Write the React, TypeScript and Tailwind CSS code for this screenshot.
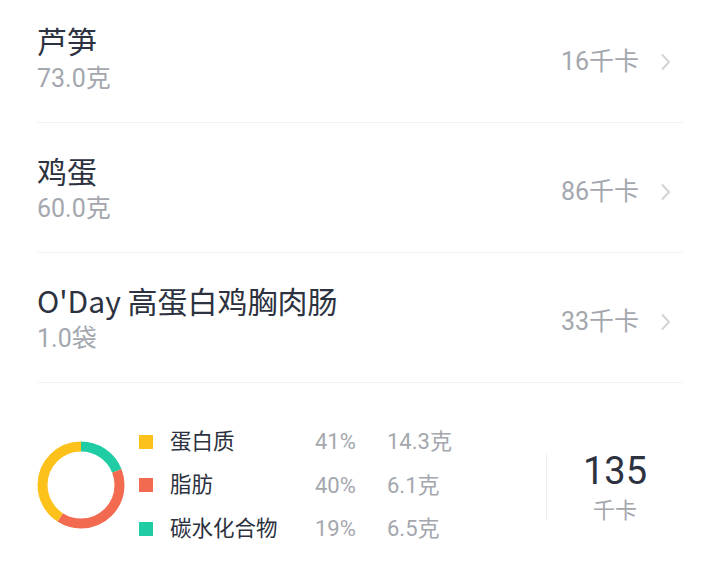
import React from "react";

const items = [
  { name: "芦笋", amount: "73.0克", kcal: "16千卡" },
  { name: "鸡蛋", amount: "60.0克", kcal: "86千卡" },
  { name: "O'Day 高蛋白鸡胸肉肠", amount: "1.0袋", kcal: "33千卡" },
];

const macros = [
  { label: "蛋白质", pct: "41%", g: "14.3克", color: "bg-[#fcc11b]" },
  { label: "脂肪", pct: "40%", g: "6.1克", color: "bg-[#f26a4f]" },
  { label: "碳水化合物", pct: "19%", g: "6.5克", color: "bg-[#1fcca3]" },
];

function Donut() {
  const r = 38.5;
  const c = 2 * Math.PI * r;
  const segs = [
    { v: 0.19, color: "#1fcca3" },
    { v: 0.4, color: "#f26a4f" },
    { v: 0.41, color: "#fcc11b" },
  ];
  let off = 0;
  return (
    <svg width="88" height="88" viewBox="0 0 88 88">
      <g transform="rotate(-90 44 44)">
        {segs.map((s, i) => {
          const el = (
            <circle
              key={i}
              cx="44"
              cy="44"
              r={r}
              fill="none"
              stroke={s.color}
              strokeWidth="10"
              strokeDasharray={`${s.v * c} ${c}`}
              strokeDashoffset={-off * c}
            />
          );
          off += s.v;
          return el;
        })}
      </g>
    </svg>
  );
}

export default function App() {
  return (
    <div
      className="w-[720px] h-[574px] bg-white overflow-hidden"
      style={{ fontFamily: "Roboto, 'Noto Sans CJK SC', sans-serif" }}
    >
      <div className="mx-[37px]">
        {items.map((it, i) => (
          <div
            key={i}
            className={`flex items-center border-b border-[#f2f2f2] pb-[27px] ${i === 0 ? "pt-[25px]" : "pt-[32px]"}`}
          >
            <div className="flex-1 flex flex-col gap-[8px]">
              <div
                className="text-[30px] leading-[30px] text-[#2d3240]"
                style={{ fontFamily: "'Noto Sans CJK SC', sans-serif" }}
              >
                {it.name}
              </div>
              <div className="text-[25px] leading-[32px] text-[#a4a7ae]">{it.amount}</div>
            </div>
            <div className="flex items-center mt-[4px]">
              <span className="text-[25px] leading-[30px] text-[#a4a7ae]">{it.kcal}</span>
              <svg className="ml-[20px] mr-[10px]" width="14" height="20" viewBox="0 0 14 20">
                <path d="M3 2.5 L10 10 L3 17.5" fill="none" stroke="#d2d3d6" strokeWidth="2" />
              </svg>
            </div>
          </div>
        ))}
      </div>
      <div className="flex items-center pl-[37px] pt-[43px]">
        <Donut />
        <div className="ml-[14px] flex flex-col gap-[12px]">
          {macros.map((m, i) => (
            <div key={i} className="flex items-center h-[31.5px]">
              <div className={`w-[14px] h-[14px] ${m.color}`} />
              <div className="ml-[17px] w-[145px] text-[21.5px] text-[#2d3240]">{m.label}</div>
              <div className="w-[72px] text-[22px] text-[#a4a7ae]">{m.pct}</div>
              <div className="text-[22px] text-[#a4a7ae]">{m.g}</div>
            </div>
          ))}
        </div>
        <div className="ml-auto mr-[37px] mt-[4px] flex items-center">
          <div className="w-px h-[66px] bg-[#eeeeee]" />
          <div className="w-[136px] flex flex-col items-center">
            <div className="text-[38px] leading-[44px] text-[#2d3240]">135</div>
            <div className="text-[22px] leading-[28px] text-[#a4a7ae] mt-[4px]">千卡</div>
          </div>
        </div>
      </div>
    </div>
  );
}
